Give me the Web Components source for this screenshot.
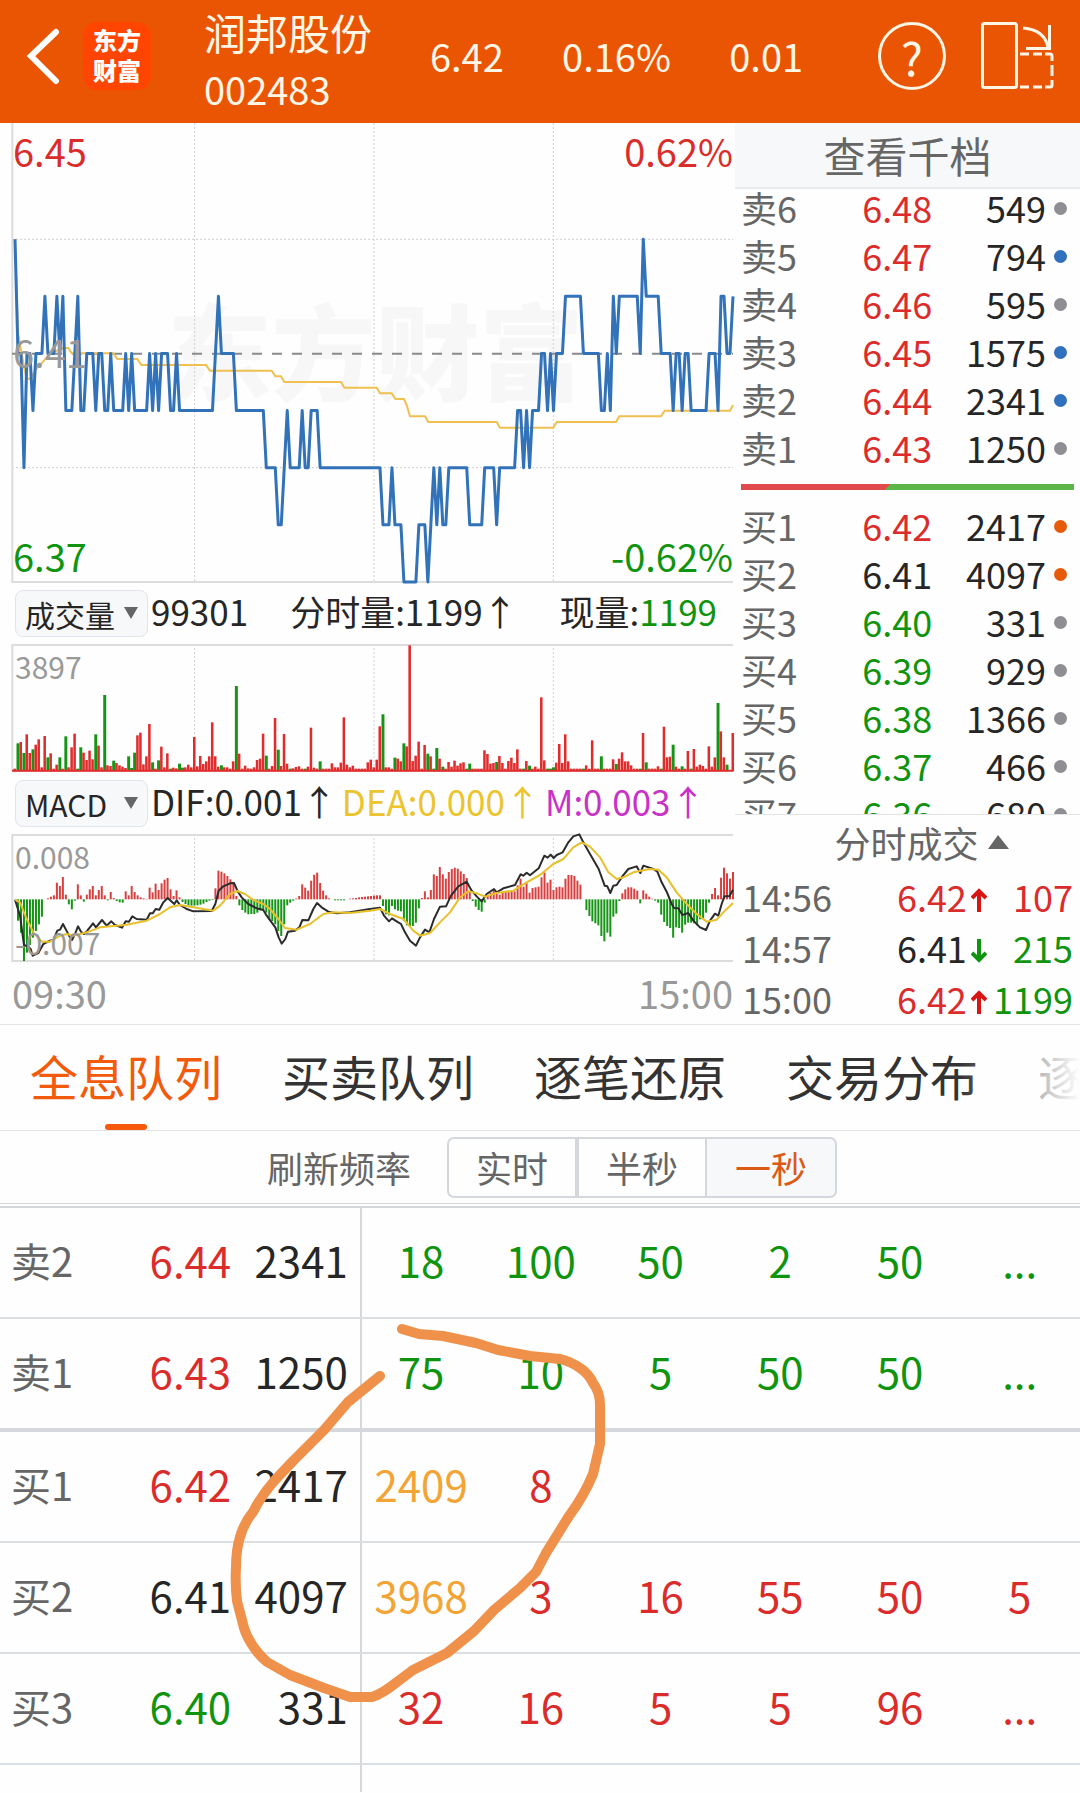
<!DOCTYPE html>
<html lang="zh-CN">
<head>
<meta charset="UTF-8">
<meta name="viewport" content="width=device-width, initial-scale=1.0">
<title>润邦股份 002483</title>
<style>
  body {
    margin: 0;
    background: #fefefe;
    color: #262626;
    font-family: "Noto Sans CJK SC", sans-serif;
    --red: #db2c2c;
    --green: #109410;
    --orange: #ea5504;
    --grey: #666;
    --light: #999;
    --line: #e2e4e6;
    --rule: #d4d8dc;
    --panel: #f7f8fa;
  }
</style>
</head>
<body>
<stock-page></stock-page>

<script>
// one slot per minute, 9 chart units wide
const minuteX = m => 36 + 9 + (m - 1) * 8.975;

class QuoteHeader extends HTMLElement {
  connectedCallback() {
    this.attachShadow({ mode: 'open' });
    this.shadowRoot.innerHTML = `
      <style>
        :host {
          display: flex;
          align-items: center;
          box-sizing: border-box;
          height: 123px;
          padding: 0 26px;
          background: var(--orange);
          color: #fff6e6;
          font-size: 38px;
        }
        a, button {
          flex: none;
          display: block;
          padding: 0;
          border: 0;
          background: none;
          color: inherit;
          font: inherit;
        }
        svg { display: block; fill: none; stroke: currentColor; }
        .back { color: #fff; margin: 0 23px 12px 0; }
        .logo {
          width: 68px;
          height: 68px;
          box-sizing: border-box;
          padding-top: 3px;
          margin-bottom: 12px;
          border-radius: 14px;
          background: #ff4500;
          color: #fff;
          font-size: 24px;
          font-weight: 900;
          line-height: 30px;
          text-align: center;
          text-decoration: none;
        }
        .stock { margin: 0 20px 4px 53px; }
        h1 { margin: 0; font-size: 42px; font-weight: 400; line-height: 58px; }
        .code { line-height: 56px; }
        .values {
          flex: 1;
          display: grid;
          grid-template-columns: repeat(3, 1fr);
          text-align: center;
          margin: 0 37px 12px 0;
        }
        .help {
          width: 68px;
          height: 68px;
          box-sizing: border-box;
          margin: 0 35px 12px 0;
          border: 3px solid;
          border-radius: 50%;
          font-size: 46px;
          line-height: 52px;
        }
        .rotate { margin-bottom: 12px; }
      </style>
      <button class="back" aria-label="返回">
        <svg width="34" height="56" viewBox="0 0 34 56" stroke-width="6" stroke-linecap="round"><path d="M30 4 L5 28 L30 53"/></svg>
      </button>
      <a class="logo" href="#">东方<br>财富</a>
      <div class="stock">
        <h1>润邦股份</h1>
        <div class="code">002483</div>
      </div>
      <div class="values"><span>6.42</span><span>0.16%</span><span>0.01</span></div>
      <button class="help">?</button>
      <button class="rotate" aria-label="横屏">
        <svg width="73" height="68" viewBox="0 0 73 68" stroke-width="3">
          <rect x="1.5" y="1.5" width="34" height="64" rx="2"/>
          <path d="M42 6 C56 7 66 14 67 27 M68.500 3 V26.500 H45"/>
          <path d="M39 32 H48 M52 32 H61 M64 32 H69 Q71 32 71 34 V39 M71 43 V54 M71 58 V63 Q71 65 69 65 H64 M61 65 H52 M48 65 H39"/>
        </svg>
      </button>
    `;
  }
}
customElements.define('quote-header', QuoteHeader);

const chartStyle = `
  :host {
    display: block;
    position: relative;
    margin: 0 2px 0 12px;
    color: var(--light);
    font-size: 30px;
    line-height: 40px;
  }
  svg { display: block; position: relative; width: 100%; overflow: visible; }
  svg * { vector-effect: non-scaling-stroke; }
  .grid { fill: none; stroke: #d0d0d0; stroke-dasharray: 2 2; }
  .frame { fill: none; stroke: #dcdcdc; stroke-width: 2; }
  .label { position: absolute; left: 3px; }
`;

class PriceChart extends HTMLElement {
  connectedCallback() {
    // hundredths above 6.37, as "level*minutes"
    const runs = '6 4*2 2 4*2 3 4*3 5 4*3 5 4 5 3*3 4 5 3*2 4*3 3 4*2 3*2 4 3*4 4 3 4 3*5 4 3 4 3 4*3 3*2 4 3*12 4 5 4*5 3*10 2*4 1*2 2 3 2*4 3 2*2 3*3 2*21 1*3 2 1*3 0*5 1*3 0 1 2 1 2 1*2 2*7 1*5 2*4 1 2*6 3*2 2 3 2 3*3 4*2 3 4 3 4*3 5*6 4*6 3*2 4 3 5 4 5*7 4 6 5*5 4*4 3 4*2 3 4*2 3*6 4*3 3 5*2 4*2 5';
    const levels = runs.split(' ').flatMap(run => {
      const [level, count] = run.split('*');
      return Array(Number(count || 1)).fill(Number(level));
    });
    const points = levels.map((level, i) => `${minuteX(i + 1)},${1386 - level * 171.4}`).join(' ');

    this.attachShadow({ mode: 'open' });
    this.shadowRoot.innerHTML = `
      <style>
        ${chartStyle}
        :host { font-size: 38px; line-height: 46px; }
        svg { height: 459px; }
        .label { left: 1px; }
        .right { left: auto; right: 0; }
        .top { top: 5px; color: var(--red); }
        .middle { top: calc(50% - 24px); }
        .bottom { bottom: 3px; color: var(--green); }
        .watermark {
          position: absolute;
          top: 150px;
          left: 0;
          right: 0;
          padding-left: 6px;
          color: #f7f7f7;
          font-size: 104px;
          font-weight: 900;
          line-height: 150px;
          text-align: center;
        }
      </style>
      <div class="watermark">东方财富</div>
      <svg viewBox="36 9 2163 1377" preserveAspectRatio="none">
        <path class="grid" d="M584 9V1386 M1122 9V1386 M1660 9V1386 M36 358H2199 M36 1043H2199"/>
        <path class="frame" d="M37 9V1386H2199"/>
        <path d="M36 701H2199" fill="none" stroke="#8a8a8a" stroke-width="2" stroke-dasharray="10 10"/>
        <polyline fill="none" stroke="#f0c050" stroke-width="2" points="45,358 54,640 72,740 80,778 92,775 110,745 125,730 150,700 190,684 205,684 215,700 340,700 352,717 412,717 424,735 618,735 630,752 815,752 826,769 843,769 853,786 1023,786 1033,803 1130,803 1140,820 1175,820 1186,837 1212,837 1220,855 1230,889 1275,889 1285,906 1490,906 1500,923 1660,923 1670,906 1848,906 1858,889 1983,889 1994,872 2190,872 2199,855"/>
        <polyline fill="none" stroke="#3272b8" stroke-width="3" stroke-linejoin="round" points="${points}"/>
      </svg>
      <span class="label top">6.45</span>
      <span class="label top right">0.62%</span>
      <span class="label middle">6.41</span>
      <span class="label bottom">6.37</span>
      <span class="label bottom right">-0.62%</span>
    `;
  }
}
customElements.define('price-chart', PriceChart);

class VolumeChart extends HTMLElement {
  connectedCallback() {
    // bar height per minute, "g" marks a falling minute
    const bars = `8 84g 88 55g 111 55 66g 80 96 12 106 42g 54 8 20 42g 8 105g 12 72 113 8g 72g 56 34 62 36 111g 77 12
      229g 18 16 32g 25 18 14 10 45g 10g 56g 108 116 21 45 142 27g 8 33g 74 12 54 8g 11 9 23g 11g 12 20 12
      103 15 46 22 30 45 147 45 14 18g 12 12 8 30 256g 53 8 17 9 8 12 34 38 113 47g 8 16 160 65g 16
      112 23 8g 9 13 15 8 8g 14 131 11 8 30g 8 8 8 24 12 12 26 162 20 12 17 8 8 8 8 27 35
      12 35 135 171g 12 12 8 41g 38 30 84g 75 378 31 47 89 8 79 53g 45 8g 70g 38 14g 8 28 14 32 17 24
      27 8g 23g 8 8 8 8 63 52 23 25 28g 46 25 8 31 41 25 66 8 8g 31 17g 8 14 8 222 33 8g 8g
      12g 26 82 25 111 30 8 8 8 8 8g 18 8 93 8 8 45g 8 8 8 36 22g 38 57 30 30 18 8 8 8g
      115 27g 8 8 8 15 8g 134 42 44 80g 14 8 15g 8 61 8g 67 14 20 16 8 75 14 42 205g 120 42 20g 0 115`;
    const rects = bars.split(/\s+/).map((bar, i) => {
      const h = parseInt(bar);
      return `<rect x="${minuteX(i + 1) - 4.5}" y="${577 - h}" width="${bar.endsWith('g') ? 8.9 : 7.6}" height="${h}" fill="${bar.endsWith('g') ? '#159415' : '#e02c2c'}"/>`;
    }).join('');

    this.attachShadow({ mode: 'open' });
    this.shadowRoot.innerHTML = `
      <style>
        ${chartStyle}
        svg { height: 128px; }
        .label { top: 2px; }
      </style>
      <svg viewBox="36 195 2163 384" preserveAspectRatio="none">
        <path class="grid" d="M584 195V576 M1122 195V576 M1660 195V576"/>
        <path class="frame" d="M2199 198H37V576"/>
        ${rects}
        <path d="M36 575H2199" stroke="#e02c2c" stroke-width="2"/>
      </svg>
      <span class="label">3897</span>
    `;
  }
}
customElements.define('volume-chart', VolumeChart);

class MacdChart extends HTMLElement {
  connectedCallback() {
    const bars = `0 -64 -100 -185 -160 -137 -115 -95 -75 -52 0 3 8 12 50 40 67 14 -15 -30 -4 45 12 -7 14 30 40 12 28 40
      12 -3 22 4 -5 -9 -10 24 12 40 22 12 6 3 1 35 21 47 28 48 59 64 30 10 27 6 -8 -14 -18 -19
      -19 -18 -16 -13 -8 -4 -2 33 86 83 78 70 60 46 10 -18 -32 -40 -45 -44 -44 -40 -33 -30 -40 -60 -65 -75 -95 -110
      -75 -18 -10 -4 2 10 45 35 26 56 74 80 49 26 12 3 0 -3 -3 -3 -3 0 2 3 4 6 7 8 9 10
      11 12 12 -20 -45 -48 -20 -30 -34 -36 -65 -78 -80 -80 -70 -27 4 24 6 28 75 70 97 75 62 82 91 95 92 84
      76 64 25 -5 -22 -32 -37 -10 12 20 28 20 14 22 24 24 22 24 42 62 38 48 20 34 36 38 66 80 50 59
      28 36 38 36 62 73 73 70 56 44 0 -32 -50 -66 -72 -78 -110 -126 -100 -112 -52 -43 -5 18 30 36 36 32 26 -12
      27 17 8 2 -4 -10 -46 -68 -80 -86 -115 -84 -86 -100 -76 -70 -70 -72 -78 -60 -56 -40 -10 16 34 12 65 95 78 62 82`;
    const rects = bars.split(/\s+/).map((bar, i) => {
      const v = Number(bar);
      return `<rect x="${minuteX(i + 1) - 3}" y="${961 - Math.max(v, 0)}" width="6" height="${Math.abs(v)}" fill="${v < 0 ? '#159415' : '#d84040'}"/>`;
    }).join('');

    this.attachShadow({ mode: 'open' });
    this.shadowRoot.innerHTML = `
      <style>
        ${chartStyle}
        svg { height: 128px; }
        polyline { fill: none; stroke-width: 2; stroke-linejoin: round; }
        .max { top: 2px; }
        .min { bottom: 0; }
      </style>
      <svg viewBox="36 765 2163 384" preserveAspectRatio="none">
        <path class="grid" d="M584 765V1146 M1122 765V1146 M1660 765V1146"/>
        <path class="frame" d="M2199 768H37V1146H2199"/>
        ${rects}
        <polyline stroke="#2b2b2b" points="45,962 60,1010 72,1098 85,1103 92,1110 98,1130 115,1122 130,1095 150,1085 160,1082 172,1055 180,1052 189,1035 198,1052 207,1070 216,1083 225,1065 234,1042 243,1058 252,1065 262,1055 279,1033 288,1045 306,1023 320,1040 334,1027 345,1038 366,1046 377,1027 387,1028 397,1012 410,1020 440,1022 450,1003 458,1003 467,990 478,992 490,970 503,957 523,975 530,964 540,978 560,990 580,997 635,996 646,975 656,935 670,922 690,913 702,912 712,935 725,955 745,975 770,988 790,993 800,1010 826,1045 836,1075 845,1094 856,1080 864,1058 885,1055 898,1045 907,1023 925,1024 940,990 951,972 965,985 985,998 1010,1003 1050,1000 1110,990 1140,986 1152,1010 1167,1027 1176,1018 1190,1027 1203,1035 1215,1060 1230,1085 1248,1100 1260,1075 1275,1052 1288,1060 1302,1020 1320,983 1338,982 1353,950 1375,922 1400,908 1415,935 1430,952 1445,967 1460,945 1482,930 1490,940 1510,928 1545,918 1562,886 1570,890 1580,881 1590,889 1616,868 1633,830 1643,836 1652,827 1661,837 1670,828 1688,820 1705,790 1720,772 1738,766 1750,790 1770,825 1796,870 1814,920 1822,922 1831,942 1840,920 1850,918 1867,892 1885,870 1910,862 1921,882 1930,860 1960,870 1972,878 1985,910 2000,938 2015,975 2022,987 2035,988 2047,1008 2065,1002 2080,1025 2100,1045 2118,1053 2130,1025 2145,1004 2155,1010 2165,975 2173,952 2188,952 2199,932"/>
        <polyline stroke="#e8c02c" points="45,962 60,970 80,1020 100,1060 125,1088 150,1088 180,1070 200,1065 220,1070 260,1060 300,1045 350,1040 380,1037 440,1025 480,1005 510,985 540,978 580,985 640,995 660,980 690,945 712,936 735,945 760,963 790,975 810,990 835,1020 855,1047 890,1052 930,1035 970,1005 1000,1000 1050,1002 1110,995 1140,990 1170,1005 1210,1020 1240,1055 1260,1070 1290,1062 1320,1030 1350,1000 1380,955 1405,937 1430,943 1455,953 1490,942 1540,935 1580,910 1620,888 1660,855 1690,840 1720,805 1745,790 1770,803 1800,835 1825,880 1850,900 1870,895 1900,880 1950,870 1975,872 2000,895 2030,940 2060,975 2090,1005 2120,1028 2150,1022 2175,995 2199,972"/>
      </svg>
      <span class="label max">0.008</span>
      <span class="label min">-0.007</span>
    `;
  }
}
customElements.define('macd-chart', MacdChart);

// Indicator drop-down with its current readings in the slot
class IndicatorBar extends HTMLElement {
  connectedCallback() {
    this.attachShadow({ mode: 'open' });
    this.shadowRoot.innerHTML = `
      <style>
        :host {
          display: flex;
          align-items: center;
          box-sizing: border-box;
          height: 62px;
          padding-left: 15px;
          font-size: 35px;
          line-height: 46px;
          white-space: nowrap;
        }
        .picker { position: relative; flex: none; width: 133px; margin-right: 3px; }
        select {
          display: block;
          appearance: none;
          box-sizing: border-box;
          width: 100%;
          height: 47px;
          padding: 0 0 4px 9px;
          border: 1px solid #e1e4ea;
          border-radius: 8px;
          background: var(--panel);
          color: #262626;
          font: inherit;
          font-size: 30px;
        }
        svg { position: absolute; right: 10px; top: 17px; fill: #666; pointer-events: none; }
        .readings { display: flex; padding-bottom: 4px; }
        ::slotted(.green) { color: var(--green); }
        ::slotted(.yellow) { color: #ebc42e; }
        ::slotted(.purple) { color: #c832c8; }
        ::slotted(.far) { margin-left: 42px; }
        ::slotted(.near) { margin-left: 5px; }
      </style>
      <div class="picker">
        <select aria-label="指标"><option>${this.getAttribute('name')}</option></select>
        <svg width="14" height="12"><path d="M0 0H14L7 12Z"/></svg>
      </div>
      <div class="readings"><slot></slot></div>
    `;
  }
}
customElements.define('indicator-bar', IndicatorBar);

class OrderBook extends HTMLElement {
  connectedCallback() {
    const row = ([side, price, tone, amount, dot]) =>
      `<tr><th>${side}</th><td class="${tone}">${price}</td><td class="amount">${amount}<i class="${dot}"></i></td></tr>`;
    const asks = [
      ['卖6', '6.48', 'red', 549, ''],
      ['卖5', '6.47', 'red', 794, 'blue'],
      ['卖4', '6.46', 'red', 595, ''],
      ['卖3', '6.45', 'red', 1575, 'blue'],
      ['卖2', '6.44', 'red', 2341, 'blue'],
      ['卖1', '6.43', 'red', 1250, '']
    ];
    const bids = [
      ['买1', '6.42', 'red', 2417, 'orange'],
      ['买2', '6.41', '', 4097, 'orange'],
      ['买3', '6.40', 'green', 331, ''],
      ['买4', '6.39', 'green', 929, ''],
      ['买5', '6.38', 'green', 1366, ''],
      ['买6', '6.37', 'green', 466, ''],
      ['买7', '6.36', 'green', 680, '']
    ];

    this.attachShadow({ mode: 'open' });
    this.shadowRoot.innerHTML = `
      <style>
        :host { display: block; font-size: 36px; }
        button {
          display: block;
          box-sizing: border-box;
          width: 100%;
          height: 66px;
          padding: 0;
          border: 0;
          border-bottom: 2px solid #ebecee;
          background: var(--panel);
          color: var(--grey);
          font: inherit;
          font-size: 42px;
          line-height: 62px;
        }
        .book { height: 625px; overflow: hidden; }
        table { width: 100%; border-collapse: collapse; table-layout: fixed; }
        table:first-child { margin-top: -6px; }
        th, td {
          height: 48px;
          padding: 0;
          font-weight: 400;
          line-height: 48px;
          text-align: left;
          white-space: nowrap;
        }
        th { width: 36%; box-sizing: border-box; padding-left: 6px; color: var(--grey); }
        td { width: 26%; box-sizing: border-box; padding-left: 3px; }
        .amount { width: 38%; padding: 0 13px 0 0; text-align: right; }
        i {
          display: inline-block;
          width: 13px;
          height: 13px;
          margin-left: 8px;
          border-radius: 50%;
          background: #8e8e93;
          vertical-align: 8px;
        }
        i.blue { background: #3070bc; }
        i.orange { background: #e65a0a; }
        .red { color: var(--red); }
        .green { color: var(--green); }
        .ratio {
          height: 6px;
          margin: 13px 6px 11px;
          background: linear-gradient(135deg, #e04a4a 44%, #5cb548 44%);
        }
      </style>
      <button>查看千档</button>
      <div class="book">
        <table>${asks.map(row).join('')}</table>
        <div class="ratio"></div>
        <table>${bids.map(row).join('')}</table>
      </div>
    `;
  }
}
customElements.define('order-book', OrderBook);

class TradeList extends HTMLElement {
  connectedCallback() {
    const up = '<svg class="up" width="16" height="24" viewBox="0 0 16 24"><path d="M8 24V3M1 10L8 3L15 10"/></svg>';
    const down = '<svg class="down" width="16" height="24" viewBox="0 0 16 24"><path d="M8 0V21M1 14L8 21L15 14"/></svg>';

    this.attachShadow({ mode: 'open' });
    this.shadowRoot.innerHTML = `
      <style>
        :host { display: block; font-size: 36px; color: var(--grey); }
        button {
          display: flex;
          align-items: center;
          justify-content: center;
          gap: 9px;
          box-sizing: border-box;
          width: 100%;
          height: 57px;
          padding: 0 0 2px 28px;
          border: 0;
          border-top: 1px solid var(--line);
          background: none;
          color: inherit;
          font: inherit;
        }
        button svg { fill: var(--grey); }
        table { width: 100%; border-collapse: collapse; table-layout: fixed; }
        td { height: 51px; box-sizing: border-box; padding: 0 0 0 7px; line-height: 51px; white-space: nowrap; }
        .price { width: 38%; padding: 0; text-align: right; color: #262626; }
        .amount { width: 27%; padding: 0 7px 0 0; text-align: right; }
        td svg { margin-left: 4px; fill: none; stroke-width: 4; }
        .up { stroke: #d81414; }
        .down { stroke: var(--green); }
        .red { color: var(--red); }
        .green { color: var(--green); }
      </style>
      <button>分时成交<svg width="21" height="14"><path d="M10 0L21 14H0Z"/></svg></button>
      <table>
        <tr><td>14:56</td><td class="price red">6.42${up}</td><td class="amount red">107</td></tr>
        <tr><td>14:57</td><td class="price">6.41${down}</td><td class="amount green">215</td></tr>
        <tr><td>15:00</td><td class="price red">6.42${up}</td><td class="amount green">1199</td></tr>
      </table>
    `;
  }
}
customElements.define('trade-list', TradeList);

class TabStrip extends HTMLElement {
  connectedCallback() {
    this.attachShadow({ mode: 'open' });
    this.shadowRoot.innerHTML = `
      <style>
        :host {
          display: block;
          position: relative;
          overflow: hidden;
          border-top: 1px solid var(--line);
          border-bottom: 1px solid var(--line);
        }
        nav { display: flex; gap: 60px; padding-left: 30px; }
        a {
          flex: none;
          position: relative;
          height: 105px;
          color: #333;
          font-size: 48px;
          line-height: 101px;
          text-decoration: none;
        }
        a.active { color: #f25a0c; }
        a.active::after {
          content: "";
          position: absolute;
          left: 50%;
          bottom: 0;
          width: 42px;
          height: 6px;
          margin-left: -21px;
          border-radius: 3px;
          background: #f7590c;
        }
        .fade {
          position: absolute;
          top: 0;
          right: 0;
          bottom: 0;
          width: 120px;
          background: linear-gradient(to right, rgba(254, 254, 254, 0), #fefefe);
          pointer-events: none;
        }
      </style>
      <nav>
        <a class="active" href="#">全息队列</a>
        <a href="#">买卖队列</a>
        <a href="#">逐笔还原</a>
        <a href="#">交易分布</a>
        <a href="#">逐</a>
      </nav>
      <div class="fade"></div>
    `;
  }
}
customElements.define('tab-strip', TabStrip);

class RefreshRate extends HTMLElement {
  connectedCallback() {
    this.attachShadow({ mode: 'open' });
    this.shadowRoot.innerHTML = `
      <style>
        :host {
          display: flex;
          align-items: center;
          justify-content: center;
          gap: 36px;
          box-sizing: border-box;
          height: 73px;
          padding-left: 24px;
          border-bottom: 1px solid var(--rule);
          color: var(--grey);
          font-size: 36px;
        }
        .group { display: flex; }
        button {
          box-sizing: border-box;
          width: 130px;
          height: 61px;
          padding: 0;
          border: 2px solid var(--rule);
          background: none;
          color: inherit;
          font: inherit;
        }
        button:first-child { border-radius: 7px 0 0 7px; }
        button:last-child { border-left: 0; border-radius: 0 7px 7px 0; }
        button[aria-pressed="true"] { background: var(--panel); color: #dc5a14; }
      </style>
      <span id="label">刷新频率</span>
      <div class="group" role="group" aria-labelledby="label">
        <button aria-pressed="false">实时</button>
        <button aria-pressed="false">半秒</button>
        <button aria-pressed="true">一秒</button>
      </div>
    `;
  }
}
customElements.define('refresh-rate', RefreshRate);

class OrderQueue extends HTMLElement {
  connectedCallback() {
    const rows = [
      ['卖2', '6.44', 'red', 2341, 'green', [18, 100, 50, 2, 50, '...']],
      ['卖1', '6.43', 'red', 1250, 'green', [75, 10, 5, 50, 50, '...']],
      ['买1', '6.42', 'red', 2417, 'red', [2409, 8, '', '', '', '']],
      ['买2', '6.41', '', 4097, 'red', [3968, 3, 16, 55, 50, 5]],
      ['买3', '6.40', 'green', 331, 'red', [32, 16, 5, 5, 96, '...']]
    ];
    const body = rows.map(([side, price, tone, total, queueTone, orders]) => `
      <tr class="${side === '卖1' ? 'last-ask' : ''}">
        <th>${side}</th><td class="price ${tone}">${price}</td><td class="total">${total}</td>
        ${orders.map(n => `<td class="${n > 1000 ? 'big' : queueTone}">${n}</td>`).join('')}
      </tr>`).join('');

    this.attachShadow({ mode: 'open' });
    this.shadowRoot.innerHTML = `
      <style>
        :host { display: block; position: relative; margin-top: 2px; border-top: 2px solid var(--rule); }
        table { width: 100%; border-collapse: separate; border-spacing: 0; table-layout: fixed; font-size: 42px; }
        th, td {
          box-sizing: border-box;
          height: 111px;
          padding: 0 1px 6px 0;
          border-bottom: 2px solid #dcdfe2;
          font-weight: 400;
          line-height: 60px;
          text-align: center;
        }
        th { padding-left: 11px; color: var(--grey); font-size: 40px; text-align: left; }
        .price { text-align: right; }
        .total { padding-right: 12px; border-right: 2px solid var(--rule); text-align: right; }
        .last-ask > * { height: 113px; border-bottom: 4px solid var(--rule); }
        .rest > * { height: 27px; padding: 0; border-bottom: 0; }
        .red { color: var(--red); }
        .green { color: var(--green); }
        .big { color: #f2a434; }
        svg { position: absolute; top: 0; left: 0; width: 100%; pointer-events: none; }
      </style>
      <table>
        <colgroup><col style="width: 11%"><col style="width: 10.500%"><col style="width: 12%"><col span="6"></colgroup>
        ${body}
        <tr class="rest"><td></td><td></td><td class="total"></td><td colspan="6"></td></tr>
      </table>
      <svg viewBox="0 1208 1080 585">
        <path fill="none" stroke="#f0914b" stroke-width="10" stroke-linecap="round" stroke-linejoin="round"
          d="M402 1329 L419 1334 L443 1336 L476 1343 L498 1350 L530 1356 L560 1359 Q572 1362 580 1368 Q589 1374 593 1383 Q600 1392 600 1405 V1444 L593 1474 Q584 1496 569 1516 L546 1553 L536 1572 L520 1588 L494 1610 L474 1631 L447 1653 L413 1670 L397 1682 Q382 1694 372 1697 H350 L324 1688 L290 1675 L267 1662 Q260 1656 255 1649 Q247 1638 244 1628 L237 1601 Q235 1585 236 1567 Q236 1550 240 1537 Q244 1523 253 1512 Q261 1496 275 1480 L293 1461 L324 1430 L348 1402 L380 1376"/>
      </svg>
    `;
  }
}
customElements.define('order-queue', OrderQueue);

class StockPage extends HTMLElement {
  connectedCallback() {
    this.attachShadow({ mode: 'open' });
    this.shadowRoot.innerHTML = `
      <style>
        :host { display: block; overflow: hidden; }
        .quote { display: grid; grid-template-columns: 735fr 345fr; }
        .charts { min-width: 0; }
        .times {
          display: flex;
          justify-content: space-between;
          padding: 0 2px 0 12px;
          color: var(--light);
          font-size: 38px;
          line-height: 62px;
        }
      </style>
      <quote-header></quote-header>
      <div class="quote">
        <div class="charts">
          <price-chart></price-chart>
          <indicator-bar name="成交量">
            <span>99301</span>
            <span class="far">分时量:1199↑</span>
            <span class="far">现量:</span><span class="green">1199</span>
          </indicator-bar>
          <volume-chart></volume-chart>
          <indicator-bar name="MACD">
            <span>DIF:0.001↑</span>
            <span class="near yellow">DEA:0.000↑</span>
            <span class="near purple">M:0.003↑</span>
          </indicator-bar>
          <macd-chart></macd-chart>
          <div class="times"><span>09:30</span><span>15:00</span></div>
        </div>
        <div>
          <order-book></order-book>
          <trade-list></trade-list>
        </div>
      </div>
      <tab-strip></tab-strip>
      <refresh-rate></refresh-rate>
      <order-queue></order-queue>
    `;
  }
}
customElements.define('stock-page', StockPage);
</script>
</body>
</html>
